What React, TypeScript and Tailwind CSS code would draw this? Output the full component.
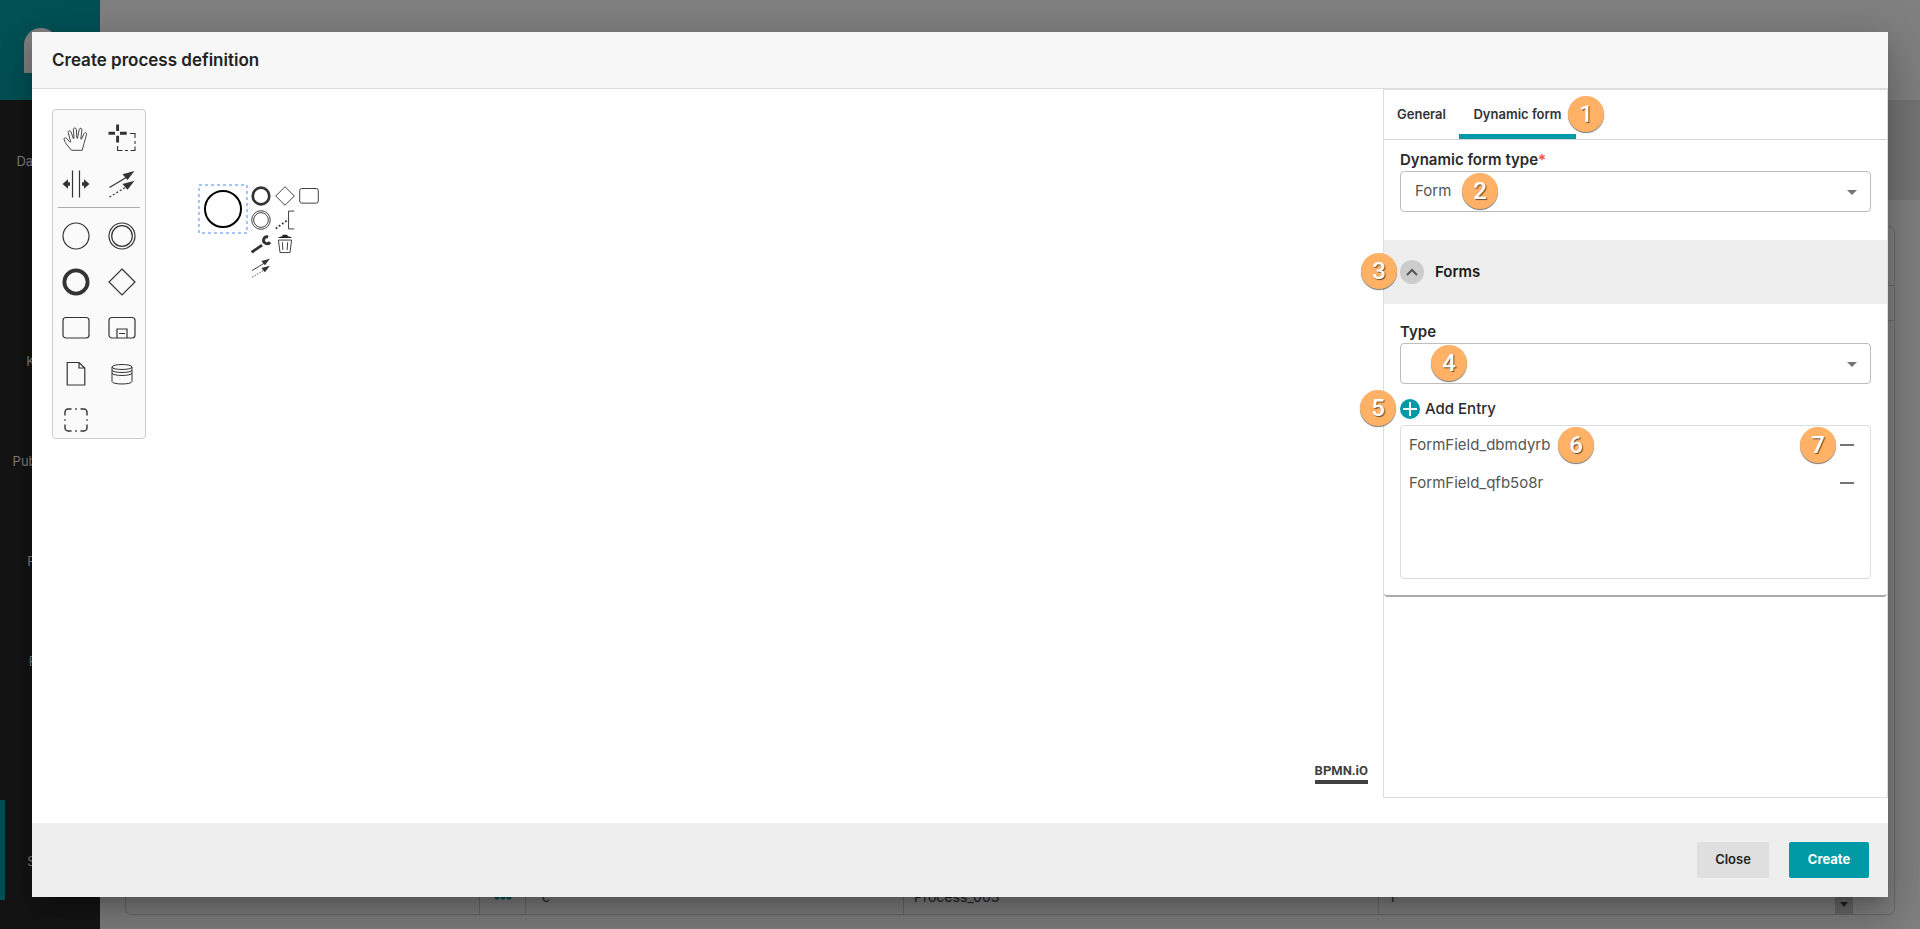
import { ReactNode } from 'react';
import clsx from 'clsx';

const MENU_ITEMS = [
  'Dashboard',
  '',
  'KoPaaS',
  'Publications',
  'Folders',
  'People',
  '',
  'System',
];

const FORM_FIELDS = ['FormField_dbmdyrb', 'FormField_qfb5o8r'];

const Icon = ({ size = 28, children }: { size?: number; children: ReactNode }) => (
  <svg
    width={size}
    height={size}
    viewBox="0 0 28 28"
    fill="none"
    stroke="#333"
    strokeWidth={size < 28 ? 1.3 : 1.2}
    aria-hidden="true"
    className="shrink-0"
  >
    {children}
  </svg>
);

const icons = {
  hand: (
    <path
      strokeLinejoin="round"
      strokeWidth="0.9"
      d="M9.5 26.3 L4.3 20 C3.2 18.2 2 15.8 2 14.8 C2.4 13.3 4.3 13.4 5.3 15.2 L8 18.2 C8.7 18.3 8.7 17.5 8.4 16.6 L6.2 8.6 C6 6.8 8 6 9 7.8 L11.3 14.5 L12 14.4 L11.4 5.4 C11.5 3.5 13.9 3.4 14.3 5.4 L14.9 14.2 L15.5 14.2 L17.3 5.3 C17.8 3.7 20.1 4 19.9 5.9 L18.8 15 L19.4 15.2 L22 9.6 C22.8 8 25 8.6 24.6 10.4 L22 19.5 L20.2 26.3 Z"
    />
  ),
  lasso: (
    <>
      <path strokeWidth="2.9" d="M9.6 0.5V7M9.6 11.8V18.5M0.5 9.3H7M12 9.3H18.7" />
      <path strokeWidth="1.1" d="M22 9.5H27V14M27 17V20M27 22.5V26.5H22.5M20 26.5H17M14.5 26.5H9.6V22" />
    </>
  ),
  space: (
    <>
      <path d="M10.5 0.5V27.5M17.5 0.5V27.5" />
      <path fill="#333" stroke="none" d="M0.5 14L6 9.3V12.3H8V15.8H6V18.7ZM27.5 14L22 9.3V12.3H20V15.8H22V18.7Z" />
    </>
  ),
  connect: (
    <>
      <path d="M1.5 17.5L19 7" />
      <path strokeDasharray="2 2" d="M1.5 27L19 16.5" />
      <path fill="#333" stroke="none" d="M26.5 1L19.5 10L14.5 4.3ZM26.5 10.8L19.5 19.8L14.5 14.1Z" />
    </>
  ),
  start: <circle cx="14" cy="14" r="13" />,
  intermediate: (
    <>
      <circle cx="14" cy="14" r="13" />
      <circle cx="14" cy="14" r="10.3" />
    </>
  ),
  end: <circle cx="14" cy="14" r="11.6" strokeWidth="3.8" />,
  gateway: <path d="M14 1L27 14L14 27L1 14Z" />,
  task: <rect x="1" y="3.5" width="26" height="20.5" rx="3" />,
  subprocess: (
    <>
      <rect x="1" y="3.5" width="26" height="20.5" rx="3" />
      <path d="M9 24V15H19V24M11 19.5H17" />
    </>
  ),
  dataObject: <path d="M5.2 2.5H17L22.8 8V25H5.2ZM17 2.5V8H22.8" />,
  dataStore: (
    <path
      strokeWidth="1"
      d="M4 7C4 3.7 24 3.7 24 7C24 10.3 4 10.3 4 7V21.5C4 24.8 24 24.8 24 21.5V7M4 10C4 13.3 24 13.3 24 10M4 13C4 16.3 24 16.3 24 13"
    />
  ),
  group: (
    <path
      strokeWidth="1.4"
      d="M9.5 3H6C4.5 3 3 4.5 3 6V9.5M13.2 3H14.8M18.5 3H22C23.5 3 25 4.5 25 6V9.5M25 13.2V14.8M25 18.5V22C25 23.5 23.5 25 22 25H18.5M14.8 25H13.2M9.5 25H6C4.5 25 3 23.5 3 22V18.5M3 14.8V13.2"
    />
  ),
  annotation: (
    <>
      <path d="M27 1.5H19V26.5H27" />
      <path strokeWidth="2.4" strokeDasharray="2.6 2.8" d="M1 26L19 13" />
    </>
  ),
  wrench: (
    <>
      <path strokeWidth="4" d="M1 25.5L15.5 15.5" />
      <path strokeWidth="4.2" d="M24 4.2A4.8 4.8 0 1 0 26.5 11.3" />
    </>
  ),
  trash: (
    <>
      <path fill="#222" stroke="none" d="M4 5.5C6 3.8 9 3.5 10 3L11 1.2H17L18 3C20 3.6 22 3.8 24 5.5Z" />
      <path d="M4.8 8.5H23.2L21 26H7ZM10.3 11.5L11 22.5M17.7 11.5L17 22.5" />
    </>
  ),
};

type IconName = keyof typeof icons;

const PALETTE_TOOLS: [IconName, string][] = [
  ['hand', 'Activate hand tool'],
  ['lasso', 'Activate lasso tool'],
  ['space', 'Activate create/remove space tool'],
  ['connect', 'Activate global connect tool'],
];

const PALETTE_ELEMENTS: [IconName, string][] = [
  ['start', 'Create start event'],
  ['intermediate', 'Create intermediate event'],
  ['end', 'Create end event'],
  ['gateway', 'Create gateway'],
  ['task', 'Create task'],
  ['subprocess', 'Create expanded sub process'],
  ['dataObject', 'Create data object reference'],
  ['dataStore', 'Create data store reference'],
  ['group', 'Create group'],
];

const CONTEXT_PAD: [IconName, string][][] = [
  [
    ['end', 'Append end event'],
    ['gateway', 'Append gateway'],
    ['task', 'Append task'],
  ],
  [
    ['intermediate', 'Append intermediate event'],
    ['annotation', 'Append text annotation'],
  ],
  [
    ['wrench', 'Change type'],
    ['trash', 'Remove'],
  ],
  [['connect', 'Connect using sequence flow']],
];

const PaletteGroup = ({ entries }: { entries: [IconName, string][] }) => (
  <div className="grid grid-cols-2">
    {entries.map(([name, title]) => (
      <button key={title} title={title} className="flex h-[46px] items-center justify-center">
        <Icon>{icons[name]}</Icon>
      </button>
    ))}
  </div>
);

// Numbered marker that lies over the form controls
const Step = ({ n, className }: { n: number; className: string }) => (
  <span
    className={clsx(
      'pointer-events-none absolute z-10 flex h-9 w-9 items-center justify-center rounded-full bg-[#ffb266] font-[Roboto,sans-serif] text-2xl font-medium text-white shadow-[0_1px_1px_rgba(0,0,0,0.55)] [text-shadow:1px_1px_1px_rgba(0,0,0,0.6)]',
      className
    )}
  >
    {n}
  </span>
);

const SelectField = ({ id, label, required, options, children }: {
  id: string;
  label: string;
  required?: boolean;
  options: string[];
  children?: ReactNode;
}) => (
  <div>
    <label htmlFor={id} className="block text-[15px] leading-[22px] font-semibold text-[#2b2b2b]">
      {label}
      {required && <span className="text-[#f4511e]">*</span>}
    </label>
    <div className="relative">
      <select
        id={id}
        className="h-[41px] w-full appearance-none rounded border border-[#bdbdbd] bg-white px-3.5 text-[15px] text-[#555]"
      >
        {options.map((option) => (
          <option key={option}>{option}</option>
        ))}
      </select>
      <svg width="10" height="5" viewBox="0 0 10 5" className="pointer-events-none absolute top-[19px] right-3.5">
        <path d="M0 0H10L5 5Z" fill="#757575" />
      </svg>
      {children}
    </div>
  </div>
);

const Backdrop = () => (
  <div className="absolute inset-0 flex overflow-hidden bg-[#808080] text-[13px]" aria-hidden="true">
    <div className="w-[100px] shrink-0 bg-[#151515] text-[#808080]">
      <div className="flex h-[100px] items-center justify-center bg-[#005155]">
        <svg width="52" height="46" viewBox="0 0 52 46">
          <path d="M0 50V18A17 17 0 0 1 34 18V50Z" fill="#808080" />
        </svg>
      </div>
      {MENU_ITEMS.map((item, i) => (
        <div
          key={i}
          className={clsx(
            'flex h-[100px] items-center justify-center border-l-[5px] pt-[24px] pr-[5px]',
            item === 'System' ? 'border-[#005155]' : 'border-transparent'
          )}
        >
          {item}
        </div>
      ))}
    </div>
    <div className="flex min-w-0 grow flex-col">
      <div className="h-[100px] shrink-0" />
      <div className="h-[100px] shrink-0 bg-[#747474]" />
      <div className="mx-[25px] mt-[26px] mb-[14px] flex grow flex-col rounded-md border border-[#6a6a6a]">
        <div className="h-[59px] border-b border-[#6a6a6a]" />
        <div className="h-[35px] border-b border-[#6a6a6a]" />
        <div className="grow" />
        <div className="flex h-[40px] items-center text-sm leading-[46px] text-[#222]">
          <div className="h-full w-[354px] border-r border-[#6a6a6a]" />
          <div className="flex h-full w-[46px] items-center justify-center border-r border-[#6a6a6a] pt-1.5">
            <svg width="18" height="6" viewBox="0 0 18 6" fill="#005155">
              <circle cx="3" cy="3" r="2.5" />
              <circle cx="9" cy="3" r="2.5" />
              <circle cx="15" cy="3" r="2.5" />
            </svg>
          </div>
          <div className="h-full w-[378px] border-r border-[#6a6a6a] px-4">c</div>
          <div className="h-full w-[475px] border-r border-[#6a6a6a] px-2.5">Process_003</div>
          <div className="h-full min-w-0 grow px-2.5">1</div>
          <div className="mr-[41px] flex h-full w-[18px] items-center justify-center border-r border-[#6a6a6a] bg-[#696969] pt-5">
            <svg width="8" height="5" viewBox="0 0 8 5">
              <path d="M0 0H8L4 5Z" fill="#222" />
            </svg>
          </div>
        </div>
      </div>
    </div>
  </div>
);

const Canvas = () => (
  <div className="flex min-w-0 grow items-start pt-5 pl-5">
    <div className="h-[330px] w-[94px] shrink-0 rounded-sm border border-[#ccc] bg-[#fafafa] pt-[5px]">
      <PaletteGroup entries={PALETTE_TOOLS} />
      <hr className="mx-[5px] mb-[5px] border-[#aaa]" />
      <PaletteGroup entries={PALETTE_ELEMENTS} />
    </div>

    <div className="mt-[75px] ml-[52px] flex">
      <svg width="50" height="50" viewBox="0 0 50 50" fill="none">
        <rect x="1" y="1" width="48" height="48" stroke="#a3c5fb" strokeWidth="2" strokeDasharray="3 3" />
        <circle cx="25" cy="25" r="18" stroke="#000" strokeWidth="2" />
      </svg>
      <div className="ml-[3px] flex flex-col gap-1 pt-0.5">
        {CONTEXT_PAD.map((row, i) => (
          <div key={i} className="flex gap-1">
            {row.map(([name, title]) => (
              <button key={title} title={title} className="flex h-5 w-5 items-center justify-center">
                <Icon size={20}>{icons[name]}</Icon>
              </button>
            ))}
          </div>
        ))}
      </div>
    </div>

    <a
      href="http://bpmn.io"
      className="mr-[15px] mb-[39px] ml-auto self-end border-b-4 border-[#404040] font-[Roboto,sans-serif] text-[13px] leading-[18px] font-bold text-[#404040]"
    >
      BPMN.iO
    </a>
  </div>
);

const PropertiesPanel = () => (
  <aside className="mb-[25px] w-[505px] shrink-0 border border-[#dcdcdf]">
    <div className="relative rounded-b border-b-2 border-[#ababab] pb-4">
      <div role="tablist" className="flex h-[50px] border-b border-[#d5d5d8] text-[13px] font-semibold text-[#333]">
        <button role="tab" aria-selected="false" className="w-[75px] border-b-[5px] border-transparent pt-1.5">
          General
        </button>
        <button
          role="tab"
          aria-selected="true"
          className="relative w-[117px] border-b-[5px] border-[#009aa6] pt-1.5 whitespace-nowrap"
        >
          Dynamic form
          <Step n={1} className="top-1.5 left-[109px]" />
        </button>
      </div>

      <div className="px-4 pt-[9px] pb-7">
        <SelectField id="form-type" label="Dynamic form type" required options={['Form']}>
          <Step n={2} className="top-[2px] left-[62px]" />
        </SelectField>
      </div>

      <div className="relative flex h-16 items-center gap-[11px] bg-[#eee] px-4">
        <button aria-label="Collapse" className="flex h-6 w-6 items-center justify-center rounded-full bg-[#ccc]">
          <svg width="12" height="8" viewBox="0 0 12 8" fill="none" stroke="#555" strokeWidth="2">
            <path d="M1 7L6 2L11 7" />
          </svg>
        </button>
        <h3 className="text-[15px] font-semibold text-[#1a1a1a]">Forms</h3>
        <Step n={3} className="top-[13px] -left-[23px]" />
      </div>

      <div className="px-4 pt-[17px]">
        <SelectField id="type" label="Type" options={['']}>
          <Step n={4} className="top-[2px] left-[31px]" />
        </SelectField>

        <div className="relative flex h-[41px] items-center pt-[9px]">
          <button className="flex items-center gap-[5px] text-[15px] font-medium text-[#2b2b2b]">
            <svg width="20" height="20" viewBox="0 0 20 20">
              <circle cx="10" cy="10" r="10" fill="#009aa6" />
              <path d="M3 10H17M10 3V17" stroke="#fff" strokeWidth="2" />
            </svg>
            Add Entry
          </button>
          <Step n={5} className="top-[6px] -left-10" />
        </div>

        <ul className="h-[154px] rounded border border-[#dcdcdf] text-[15px] text-[#555]">
          {FORM_FIELDS.map((field, i) => (
            <li key={field} className="relative flex h-[38px] items-center justify-between pr-4 pl-2">
              {field}
              <button aria-label={`Remove ${field}`} className="py-2">
                <span className="block h-0.5 w-3.5 bg-[#757575]" />
              </button>
              {i === 0 && <Step n={6} className="top-[1px] left-[157px]" />}
              {i === 0 && <Step n={7} className="top-[1px] right-[34px]" />}
            </li>
          ))}
        </ul>
      </div>
    </div>
  </aside>
);

export default function App() {
  return (
    <div className="relative flex h-screen flex-col p-8 font-[Inter,sans-serif]">
      <Backdrop />
      <div
        role="dialog"
        aria-labelledby="dialog-title"
        className="relative flex min-h-0 grow flex-col bg-white shadow-[0_11px_15px_-7px_rgba(0,0,0,0.2),0_24px_38px_3px_rgba(0,0,0,0.14),0_9px_46px_8px_rgba(0,0,0,0.12)]"
      >
        <header className="flex h-[57px] shrink-0 items-center border-b border-[#dcdcdf] bg-[#f7f7f7] px-5 pt-0.5">
          <h2 id="dialog-title" className="text-[17px] font-semibold text-[#222]">
            Create process definition
          </h2>
        </header>
        <main className="flex min-h-0 grow">
          <Canvas />
          <PropertiesPanel />
        </main>
        <footer className="flex h-[74px] shrink-0 items-center justify-end gap-5 bg-[#eee] px-[19px] text-[13px]">
          <button className="h-9 w-[72px] rounded-xs bg-[#dfdfdf] font-semibold text-[#222]">Close</button>
          <button className="h-9 w-20 rounded-xs bg-[#009aa6] font-bold text-white">Create</button>
        </footer>
      </div>
    </div>
  );
}
